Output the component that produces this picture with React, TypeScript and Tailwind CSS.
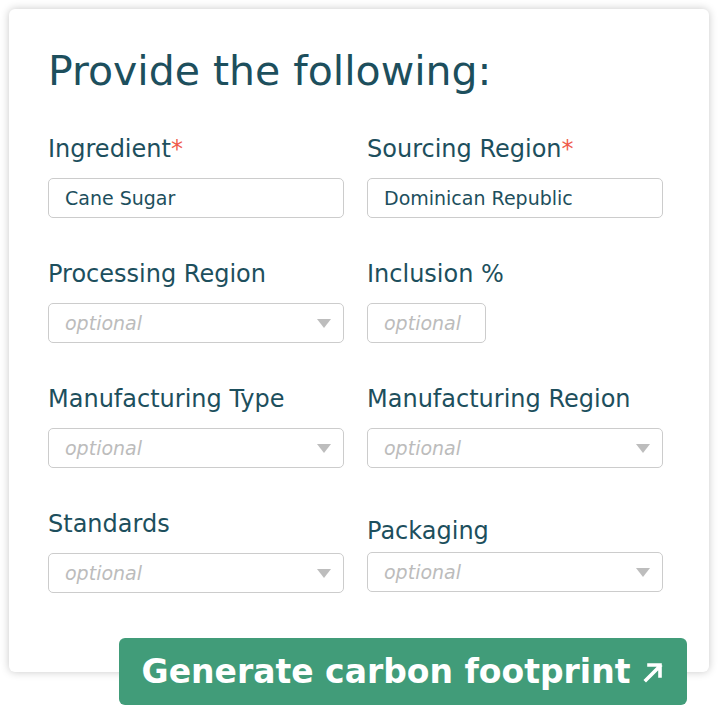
import { ReactNode } from 'react'

const font = { fontFamily: '"DejaVu Sans", "Noto Sans", sans-serif' }

function Chevron() {
  return (
    <svg width="14" height="9" viewBox="0 0 14 9" className="shrink-0">
      <polygon points="0,0 14,0 7,9" fill="#bdbdbd" />
    </svg>
  )
}

function Arrow() {
  return (
    <svg width="22" height="22" viewBox="0 0 22 22" className="shrink-0">
      <path d="M4 19 L18 5 M7 4 H18 V15" fill="none" stroke="white" strokeWidth="3.6" strokeLinecap="square" />
    </svg>
  )
}

interface FieldProps {
  label: string
  required?: boolean
  value?: string
  select?: boolean
  narrow?: boolean
  shifted?: boolean
}

function Field({ label, required, value, select, narrow, shifted }: FieldProps) {
  return (
    <div className={`flex flex-col ${shifted ? 'mt-[7px]' : ''}`}>
      <label className="text-[24px] leading-[28px] text-[#1d4f5d] whitespace-nowrap">
        {label}
        {required && <span className="text-[#ef5b4b]">*</span>}
      </label>
      <div
        className={`${shifted ? 'mt-[7px]' : 'mt-[15px]'} h-[40px] rounded-[5px] border border-[#cccccc] bg-white flex items-center justify-between pl-[16px] pr-[12px] ${
          narrow ? 'w-[119px]' : 'w-[296px]'
        }`}
      >
        {value ? (
          <span className="text-[19px] text-[#1d4f5d]">{value}</span>
        ) : (
          <span className="text-[19px] italic text-[#bcbcbc]">optional</span>
        )}
        {select && <Chevron />}
      </div>
    </div>
  )
}

function Row({ children }: { children: ReactNode }) {
  return <div className="grid grid-cols-[296px_296px] gap-x-[23px] items-start">{children}</div>
}

export default function App() {
  return (
    <div className="w-[718px] h-[706px] bg-white pt-[9px] pl-[9px]" style={font}>
      <div className="w-[700px] h-[663px] rounded-[6px] bg-white shadow-[0_0_8px_rgba(0,0,0,0.22)] pl-[39px] pt-[38px]">
        <h1 className="text-[41px] leading-[48px] text-[#1d4f5d] font-normal">Provide the following:</h1>
        <div className="mt-[40px] flex flex-col gap-y-[42px]">
          <Row>
            <Field label="Ingredient" required value="Cane Sugar" />
            <Field label="Sourcing Region" required value="Dominican Republic" />
          </Row>
          <Row>
            <Field label="Processing Region" select />
            <Field label="Inclusion %" narrow />
          </Row>
          <Row>
            <Field label="Manufacturing Type" select />
            <Field label="Manufacturing Region" select />
          </Row>
          <Row>
            <Field label="Standards" select />
            <Field label="Packaging" select shifted />
          </Row>
        </div>
      </div>
      <div className="flex justify-end pr-[31px] -mt-[34px] relative">
        <button className="h-[67px] w-[568px] rounded-[6px] bg-[#419c79] text-white font-bold text-[33px] flex items-center justify-center gap-[12px]">
          <span>Generate carbon footprint</span>
          <Arrow />
        </button>
      </div>
    </div>
  )
}
